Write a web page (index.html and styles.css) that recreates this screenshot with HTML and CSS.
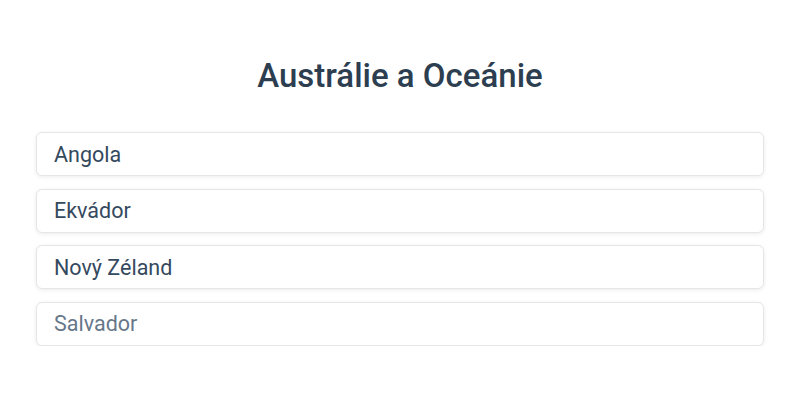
FILE: index.html
```html
<!DOCTYPE html>
<html lang="cs">
<head>
  <meta charset="UTF-8">
  <title>Austrálie a Oceánie</title>
  <link rel="stylesheet" href="styles.css">
</head>
<body>
  <div class="quiz">
    <h1 class="title">Austrálie a Oceánie</h1>
    <ul class="options">
      <li class="option">Angola</li>
      <li class="option">Ekvádor</li>
      <li class="option">Nový Zéland</li>
      <li class="option faded">Salvador</li>
    </ul>
  </div>
</body>
</html>
```

FILE: styles.css
```css
body {
  margin: 0;
  padding: 0;
  background: #ffffff;
  font-family: Roboto, "Liberation Sans", sans-serif;
  color: #2c3e50;
}

.quiz {
  padding: 54px 36px 0;
}

.title {
  margin: 0 0 34px;
  text-align: center;
  font-size: 33px;
  font-weight: 500;
  line-height: 44px;
  color: #2c3e50;
}

.options {
  list-style: none;
  margin: 0;
  padding: 0;
  display: flex;
  flex-direction: column;
  gap: 12.5px;
}

.option {
  height: 44px;
  box-sizing: border-box;
  display: flex;
  align-items: center;
  padding: 0 17px;
  border: 1px solid #e6e6e6;
  border-radius: 6px;
  box-shadow: 0 1px 4px rgba(0, 0, 0, 0.08);
  font-size: 21.5px;
  background: #fff;
  color: #34495e;
}

.faded {
  color: #66778a;
}
```
